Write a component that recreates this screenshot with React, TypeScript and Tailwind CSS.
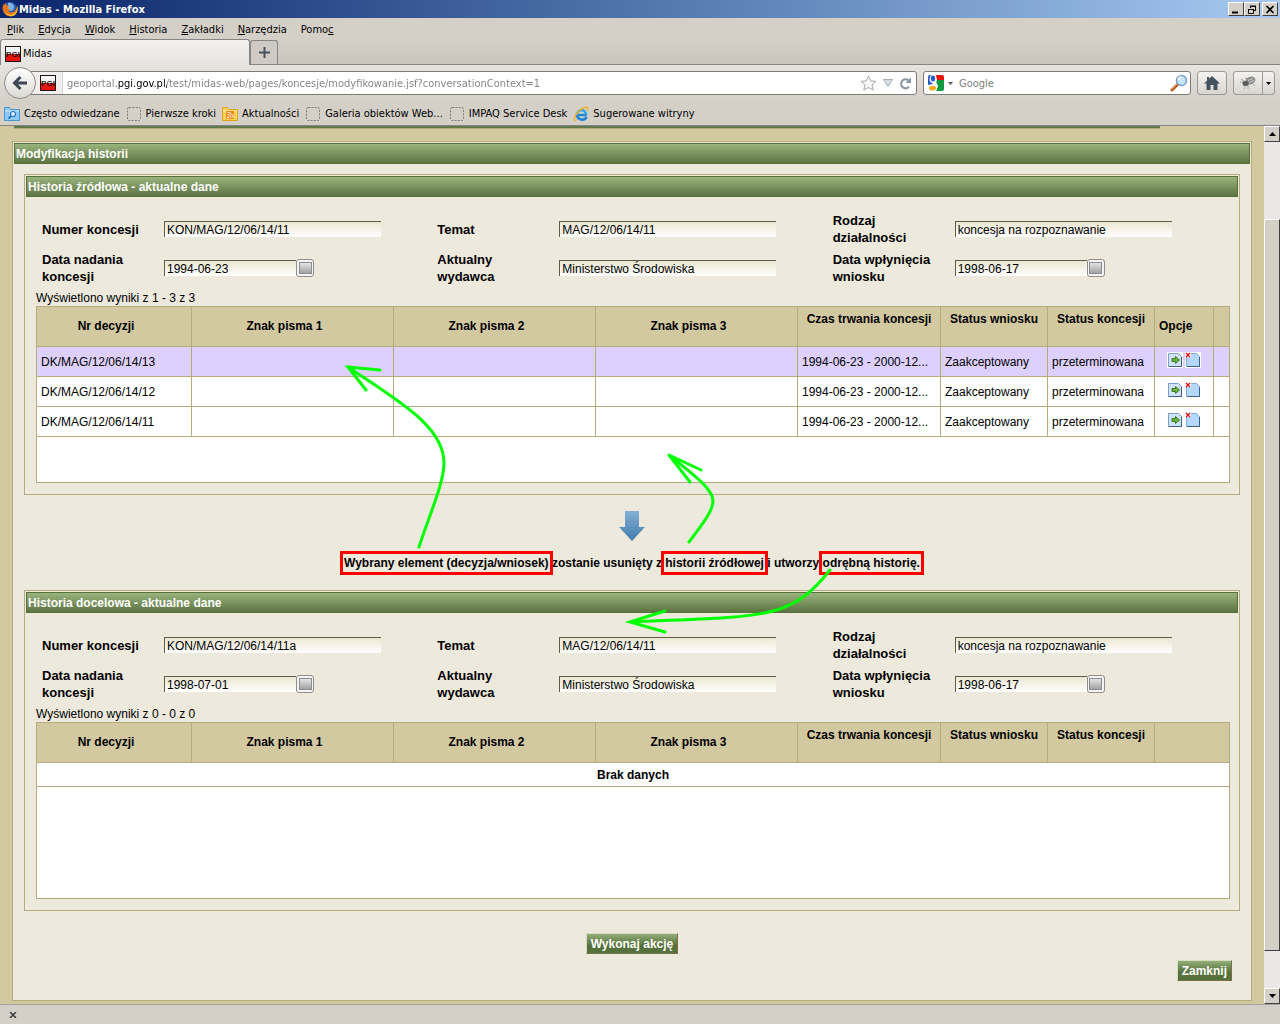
import { useId, type ReactNode } from 'react'
import clsx from 'clsx'

interface FieldData {
  label: string
  value: string
  date?: boolean
}

const SOURCE_FIELDS: FieldData[] = [
  { label: 'Numer koncesji', value: 'KON/MAG/12/06/14/11' },
  { label: 'Temat', value: 'MAG/12/06/14/11' },
  { label: 'Rodzaj działalności', value: 'koncesja na rozpoznawanie' },
  { label: 'Data nadania koncesji', value: '1994-06-23', date: true },
  { label: 'Aktualny wydawca', value: 'Ministerstwo Środowiska' },
  { label: 'Data wpłynięcia wniosku', value: '1998-06-17', date: true },
]

const TARGET_FIELDS: FieldData[] = [
  { label: 'Numer koncesji', value: 'KON/MAG/12/06/14/11a' },
  { label: 'Temat', value: 'MAG/12/06/14/11' },
  { label: 'Rodzaj działalności', value: 'koncesja na rozpoznawanie' },
  { label: 'Data nadania koncesji', value: '1998-07-01', date: true },
  { label: 'Aktualny wydawca', value: 'Ministerstwo Środowiska' },
  { label: 'Data wpłynięcia wniosku', value: '1998-06-17', date: true },
]

const DECISIONS = ['DK/MAG/12/06/14/13', 'DK/MAG/12/06/14/12', 'DK/MAG/12/06/14/11']

// text before the access key, the key itself, the rest
const MENU: [string, string, string][] = [
  ['', 'P', 'lik'],
  ['', 'E', 'dycja'],
  ['', 'W', 'idok'],
  ['', 'H', 'istoria'],
  ['', 'Z', 'akładki'],
  ['', 'N', 'arzędzia'],
  ['Pomo', 'c', ''],
]

const CELL = 'border-r border-b border-[#b6ab7b] last:border-r-0'

/* ---------- icons ---------- */

function FirefoxIcon() {
  return (
    <svg width="16" height="16" viewBox="0 0 16 16" aria-hidden="true">
      <circle cx="8" cy="8" r="7" fill="#2b5fae" />
      <path d="M6 2c3-1 6 1 6 4s-2 4-4 4-3-2-2-4z" fill="#7fb4e6" />
      <path
        d="M1.500 3c-1 3-1.500 5 0 8 2 4 7 5.500 10.500 3.500C15.500 12.500 16.500 8 15 4.500c-.3 3-1 5-3.500 6.500-2 1-5 .5-5.500-1.500 1 .4 2 0 2.700-.8-1.700 0-2.700-.7-2.700-2 0-.8.7-1 1.500-1.200C6.500 4.500 5 4 4 4.500 3.500 3.500 4 2.500 4.500 1.500 3.300 2 2.500 3 2.300 4z"
        fill="#e8741a"
      />
      <path d="M15 4.500c.6 4-1 8-5 9-3 .6-6-.6-7.500-3 1 4 6 5.500 9.500 4 3.500-2 4.500-6.500 3-10z" fill="#fbc02d" />
    </svg>
  )
}

function PgiIcon() {
  return (
    <svg width="16" height="16" viewBox="0 0 16 16" aria-hidden="true">
      <path fill="#1d1215" d="M0 0h16v16H0z" />
      <path fill="#f6f6f6" d="M1 1h14v8H1z" />
      <path fill="#e81608" d="M1 8h14v7H1z" />
      <text
        x="8"
        y="11"
        textAnchor="middle"
        fill="#1d1215"
        fontFamily="Liberation Sans Narrow, Liberation Sans, sans-serif"
        fontSize="8"
        fontWeight="bold"
      >
        PGI
      </text>
    </svg>
  )
}

function FolderIcon({ feed }: { feed?: boolean }) {
  const edge = feed ? '#e0a21c' : '#4795cf'
  return (
    <svg width="16" height="16" viewBox="0 0 16 16" aria-hidden="true">
      <path d="M.5 14.500V1.500h5l1 2h9v11z" fill={feed ? '#fbd35a' : '#8cc8f2'} stroke={edge} />
      <path d="M1 5h14" stroke={feed ? '#fdeaa5' : '#c9e8fc'} />
      {feed ? (
        <>
          <path fill="#f08a1c" d="M4 5h8v8H4z" />
          <path d="M5.500 8.500a3.500 3.500 0 013.500 3.500M5.500 6.300A5.500 5.500 0 0111.200 12" stroke="#fff" fill="none" />
          <circle cx="6" cy="11.500" r="1" fill="#fff" />
        </>
      ) : (
        <>
          <circle cx="9" cy="8" r="2.500" fill="#dff2ff" stroke="#2a78b8" strokeWidth="1.200" />
          <path d="M7.200 10L4.500 12.700" stroke="#2a78b8" strokeWidth="1.800" />
        </>
      )}
    </svg>
  )
}

function BlankIcon() {
  return (
    <svg width="16" height="16" viewBox="0 0 16 16" aria-hidden="true">
      <rect x="1.500" y="1.500" width="13" height="13" rx="1.500" fill="none" stroke="#7e7c77" strokeDasharray="2 1.300" />
    </svg>
  )
}

function ExplorerIcon() {
  return (
    <svg width="16" height="16" viewBox="0 0 16 16" aria-hidden="true">
      <path d="M14 9H4.500M4 8.500c0 6 8 6.500 9.500 2.500" fill="none" stroke="#1f86d8" strokeWidth="2.600" />
      <path d="M4 9c0-6.500 9-6.500 9 0" fill="none" stroke="#3ba5ee" strokeWidth="2.600" />
      <path d="M2.500 15C-1 13 5 3.500 11.500 1.500c3-1 4 .5 2.700 3" fill="none" stroke="#f2b01e" strokeWidth="1.400" />
    </svg>
  )
}

function GoogleIcon() {
  return (
    <svg width="16" height="16" viewBox="0 0 16 16" aria-hidden="true">
      <path fill="#fff" d="M0 0h16v16H0z" />
      <path fill="#e6160d" d="M8 0h6a2 2 0 012 2v4H9z" />
      <path fill="#139a3e" d="M9 5h7v9a2 2 0 01-2 2H8l2-5-2-3z" />
      <path fill="#2a5bc8" d="M0 2a2 2 0 012-2h1v7l2 2-5 1z" />
      <ellipse cx="5" cy="4" rx="3.400" ry="3.800" fill="#fff" />
      <ellipse cx="5" cy="3.600" rx="2.200" ry="3" fill="#2a5bc8" />
      <ellipse cx="4.500" cy="13" rx="4.500" ry="3.200" fill="#fff" />
      <ellipse cx="4.500" cy="13.200" rx="3.500" ry="2.400" fill="#f2ae1b" />
      <path d="M6 7c2 1 3 2 2.500 4" fill="none" stroke="#fff" strokeWidth="1.600" />
    </svg>
  )
}

function MagnifierIcon() {
  return (
    <svg width="18" height="18" viewBox="0 0 18 18" aria-hidden="true">
      <path d="M7.500 10.500L2 16" stroke="#c05a1c" strokeWidth="3" strokeLinecap="round" />
      <path d="M6.500 10.500L2 15" stroke="#f3a45a" strokeLinecap="round" />
      <circle cx="11.500" cy="6.500" r="5" fill="#c5e7fb" stroke="#7b9fd0" strokeWidth="1.500" />
      <path d="M8.500 6a3 3 0 013-3" stroke="#fff" strokeWidth="1.500" fill="none" />
    </svg>
  )
}

function BackIcon() {
  return (
    <svg width="16" height="16" viewBox="0 0 16 16" aria-hidden="true">
      <path d="M8.500 2L2.500 8l6 6M3 8h12" fill="none" stroke="#3b4754" strokeWidth="3" />
    </svg>
  )
}

function StarIcon() {
  return (
    <svg width="17" height="16" viewBox="0 0 17 16" aria-hidden="true">
      <path
        d="M8.500 1l2.200 4.800 5.300.6-4 3.500 1.200 5.100-4.700-2.600L3.800 15 5 9.900 1 6.400l5.300-.6z"
        fill="#f7f7f7"
        stroke="#a9a9a9"
      />
    </svg>
  )
}

function ReloadIcon() {
  return (
    <svg width="13" height="13" viewBox="0 0 13 13" aria-hidden="true">
      <path d="M10 9.800A4.500 4.500 0 119.500 3.300" fill="none" stroke="#8b98a5" strokeWidth="2.200" />
      <path d="M12 .5v5.500H6.500z" fill="#8b98a5" />
    </svg>
  )
}

function HomeIcon() {
  return (
    <svg width="16" height="14" viewBox="0 0 16 14" aria-hidden="true">
      <path d="M8 0l8 7.500h-2.500V14h-4V9h-3v5h-4V7.500H0L3 4.700V1h2v1.800z" fill="#46535f" />
    </svg>
  )
}

function BugIcon() {
  return (
    <svg width="16" height="14" viewBox="0 0 16 14" aria-hidden="true">
      <path d="M1 3l5 3M0 6h5M4 13l2-4M8 13V9M13 8l2 2M5 2l3 1" stroke="#a5a5a5" />
      <ellipse cx="10.500" cy="4.500" rx="5" ry="3.700" fill="#8a8a8a" transform="rotate(-20 10.500 4.500)" />
      <ellipse cx="5.500" cy="7.500" rx="3" ry="2.500" fill="#5c5c5c" />
      <path d="M8 4.500l5-2M9 6.500l5-2" stroke="#c9c9c9" />
    </svg>
  )
}

function Caret({ color }: { color: string }) {
  return (
    <svg width="5" height="3" viewBox="0 0 5 3" aria-hidden="true">
      <path d="M0 0h5L2.500 3z" fill={color} />
    </svg>
  )
}

function MoveIcon() {
  return (
    <svg width="16" height="16" viewBox="0 0 16 16" aria-hidden="true">
      <path fill="#fff" d="M0 0h16v16H0z" />
      <path d="M1.500 1.500h10l3 3v10h-13z" fill="#cfe4fb" stroke="#7d9fc8" />
      <path d="M14.500 5v9.500H2" fill="none" stroke="#3e5f8a" />
      <path d="M5 6.500h3.500V4.500l4 3.500-4 3.500v-2H5z" fill="#6cb33c" stroke="#3c7a1f" />
    </svg>
  )
}

function RemoveIcon() {
  return (
    <svg width="16" height="16" viewBox="0 0 16 16" aria-hidden="true">
      <path fill="#fff" d="M0 0h16v16H0z" />
      <path d="M1.500 1.500h10l3 3v10h-13z" fill="#b4d8fb" stroke="#7fa9da" />
      <path d="M14.500 5v9.500H2" fill="none" stroke="#3e5f8a" />
      <path fill="#fff" d="M0 0h6v5H0z" />
      <path d="M1 1l4 4M5 1L1 5" stroke="#e01414" strokeWidth="1.400" />
    </svg>
  )
}

function DownArrow() {
  return (
    <svg width="26" height="30" viewBox="0 0 26 30" aria-hidden="true">
      <defs>
        <linearGradient id="down" x1="0" y1="0" x2="0" y2="1">
          <stop offset="0" stopColor="#85afd2" />
          <stop offset="1" stopColor="#3f7cae" />
        </linearGradient>
      </defs>
      <path d="M6 0h14v16h6L13 30 0 16h6z" fill="url(#down)" />
    </svg>
  )
}

/* ---------- browser window ---------- */

function CaptionButton({ label, children }: { label: string; children: ReactNode }) {
  return (
    <button
      type="button"
      aria-label={label}
      className="flex h-[14px] w-4 items-center justify-center border border-t-white border-r-[#404040] border-b-[#404040] border-l-white bg-[#d4d0c8]"
    >
      <svg width="10" height="9" viewBox="0 0 10 9" fill="none" stroke="#000" aria-hidden="true">
        {children}
      </svg>
    </button>
  )
}

function TitleBar() {
  return (
    <header className="flex h-[18px] items-center bg-gradient-to-r from-[#0a246a] to-[#a6caf0] px-0.5">
      <FirefoxIcon />
      <span className="flex-1 pt-0.5 pl-px font-bold text-white">Midas - Mozilla Firefox</span>
      <CaptionButton label="Minimalizuj">
        <path d="M1 7.500h6" strokeWidth="2" />
      </CaptionButton>
      <CaptionButton label="Przywróć">
        <path d="M3.500 3V1.500h5v4H7M3 1h6M1.500 4.500h5v4h-5zM1 4.500h6" />
      </CaptionButton>
      <span className="w-0.5" />
      <CaptionButton label="Zamknij okno">
        <path d="M1.500 1l7 7M8.500 1l-7 7" strokeWidth="1.600" />
      </CaptionButton>
    </header>
  )
}

function MenuBar() {
  return (
    <nav className="flex h-[21px] items-center gap-3.5 pt-1 pl-[7px]">
      {MENU.map(([before, key, after]) => (
        <button key={key} type="button">
          {before}
          <u>{key}</u>
          {after}
        </button>
      ))}
    </nav>
  )
}

function TabStrip() {
  return (
    <div className="flex h-[26px] items-end border-b border-[#858585] bg-gradient-to-b from-[#d4d0c8] to-[#c9c5bd]">
      <div className="-mb-px flex h-[26px] w-[250px] items-center gap-0.5 rounded-t-[3px] border border-b-0 border-[#858585] bg-gradient-to-b from-[#f2f1ee] to-[#e6e4e0] pt-0.5 pl-1">
        <PgiIcon />
        <span className="pt-0.5">Midas</span>
      </div>
      <button
        type="button"
        aria-label="Nowa karta"
        className="flex h-6 w-7 items-center justify-center rounded-t-[3px] border border-b-0 border-[#858585] bg-[#cfcbc4]"
      >
        <svg width="11" height="11" viewBox="0 0 11 11" aria-hidden="true">
          <path d="M5.500 0v11M0 5.500h11" stroke="#4a545e" strokeWidth="2" />
        </svg>
      </button>
    </div>
  )
}

function NavBar() {
  return (
    <div className="flex h-9 items-center bg-gradient-to-b from-[#e6e4df] to-[#d4d0c8] pr-[5px] pl-1">
      <button
        type="button"
        aria-label="Wstecz"
        className="z-10 flex size-8 items-center justify-center rounded-full border border-[#8c8a86] bg-gradient-to-b from-white to-[#dcdad5]"
      >
        <BackIcon />
      </button>
      <div className="-ml-1.5 flex h-6 flex-1 items-center rounded-r-[3px] border border-[#7d7b77] bg-white pr-1">
        <span className="flex h-full w-8 items-center justify-end border-r border-[#d6d6d6] bg-[#f0efed] pr-1.5 pl-2">
          <PgiIcon />
        </span>
        {/* the domain part is darker than the rest of the address */}
        <input
          aria-label="Adres"
          className="min-w-0 flex-1 bg-[linear-gradient(90deg,#808080_53px,#000_53px,#000_104px,#808080_104px)] bg-clip-text pt-0.5 pl-1 text-transparent outline-none"
          defaultValue="geoportal.pgi.gov.pl/test/midas-web/pages/koncesje/modyfikowanie.jsf?conversationContext=1"
        />
        <span className="flex items-center gap-1.5">
          <StarIcon />
          <svg width="10" height="8" viewBox="0 0 10 8" aria-hidden="true">
            <path d="M.5.500h9L5 7.500z" fill="#d6dde4" stroke="#a5adb5" />
          </svg>
          <ReloadIcon />
        </span>
      </div>
      <div className="ml-1.5 flex h-6 w-[268px] items-center rounded-[3px] border border-[#7d7b77] bg-white pr-0.5 pl-1">
        <GoogleIcon />
        <span className="px-1">
          <Caret color="#555" />
        </span>
        <input
          aria-label="Szukaj"
          placeholder="Google"
          className="min-w-0 flex-1 pt-0.5 pl-0.5 outline-none placeholder:text-[#808080]"
        />
        <MagnifierIcon />
      </div>
      <button
        type="button"
        aria-label="Strona startowa"
        className="ml-1.5 flex h-6 w-[30px] items-center justify-center rounded-[3px] border border-[#9c9a95] bg-gradient-to-b from-[#f4f3f1] to-[#d8d5ce]"
      >
        <HomeIcon />
      </button>
      <div className="ml-1.5 flex h-6 w-[42px] rounded-[3px] border border-[#9c9a95] bg-gradient-to-b from-[#f4f3f1] to-[#d8d5ce]">
        <button type="button" aria-label="Firebug" className="flex flex-1 items-center justify-center">
          <BugIcon />
        </button>
        <button
          type="button"
          aria-label="Opcje Firebug"
          className="flex w-3 items-center justify-center border-l border-[#9c9a95]"
        >
          <Caret color="#000" />
        </button>
      </div>
    </div>
  )
}

function Bookmark({ icon, children }: { icon: ReactNode; children: ReactNode }) {
  return (
    <a href="#" className="flex items-center gap-1">
      {icon}
      {children}
    </a>
  )
}

function Bookmarks() {
  return (
    <nav className="flex h-[25px] items-center gap-1.5 border-b border-[#858585] pt-0.5 pl-1">
      <Bookmark icon={<FolderIcon />}>Często odwiedzane</Bookmark>
      <Bookmark icon={<BlankIcon />}>Pierwsze kroki</Bookmark>
      <Bookmark icon={<FolderIcon feed />}>Aktualności</Bookmark>
      <Bookmark icon={<BlankIcon />}>Galeria obiektów Web...</Bookmark>
      <Bookmark icon={<BlankIcon />}>IMPAQ Service Desk</Bookmark>
      <Bookmark icon={<ExplorerIcon />}>Sugerowane witryny</Bookmark>
    </nav>
  )
}

function ScrollButton({ label, d }: { label: string; d: string }) {
  return (
    <button
      type="button"
      aria-label={label}
      className="flex h-4 items-center justify-center border border-t-white border-r-[#404040] border-b-[#404040] border-l-white bg-[#d4d0c8]"
    >
      <svg width="7" height="4" viewBox="0 0 7 4" aria-hidden="true">
        <path d={d} />
      </svg>
    </button>
  )
}

function Scrollbar() {
  return (
    <div className="flex w-4 shrink-0 flex-col bg-[#eae8e4]">
      <ScrollButton label="W górę" d="M0 4h7L3.500 0z" />
      <div className="grow-[77]" />
      <div className="grow-[732] border border-t-white border-r-[#404040] border-b-[#404040] border-l-white bg-[#d4d0c8]" />
      <div className="grow-[37]" />
      <ScrollButton label="W dół" d="M0 0h7L3.500 4z" />
    </div>
  )
}

/* ---------- page ---------- */

function Panel({ title, className, children }: { title: string; className?: string; children: ReactNode }) {
  return (
    <section className={clsx('border border-[#b6ab7b] bg-[#ede9dc] p-px', className)}>
      <h2 className="h-[21px] border border-[#56713c] bg-gradient-to-b from-[#9ab47e] to-[#5c7442] pl-px leading-5 font-bold text-white">
        {title}
      </h2>
      {children}
    </section>
  )
}

function Field({ label, value, date }: FieldData) {
  const id = useId()
  return (
    <div className="flex h-[34px] items-center">
      <label htmlFor={id} className="w-[122px] shrink-0 pr-3 text-[13px] leading-[17px] font-bold">
        {label}
      </label>
      <input
        id={id}
        defaultValue={value}
        className={clsx(
          'h-4 border-t border-l border-[#5f5c48] bg-gradient-to-b from-[#ece6d2] to-white pl-0.5 outline-none',
          date ? 'w-[132px]' : 'w-[217px]',
        )}
      />
      {date && (
        <button
          type="button"
          aria-label="Wybierz datę"
          className="flex size-[18px] items-center justify-center rounded-[3px] border border-[#8f8f8f] bg-[#f4f4f4]"
        >
          <span className="h-3 w-[13px] border border-[#8c8c8c] bg-gradient-to-b from-[#e4e4e4] to-[#a2a2a2]" />
        </button>
      )}
    </div>
  )
}

function Fields({ items }: { items: FieldData[] }) {
  return (
    <div className="grid grid-cols-3 gap-y-[5px] pt-[15px] pr-2.5 pb-[5px] pl-4">
      {items.map((item) => (
        <Field key={item.label} {...item} />
      ))}
    </div>
  )
}

interface HistoryTableProps {
  summary: string
  options?: boolean
  children: ReactNode
}

function HistoryTable({ summary, options, children }: HistoryTableProps) {
  return (
    <div className="pr-2 pb-2.5 pl-2.5">
      <p className="leading-4">{summary}</p>
      <div className="h-[177px] border border-[#b6ab7b] bg-white">
        <table className="w-full table-fixed border-separate border-spacing-0">
          <colgroup>
            <col className="w-[155px]" />
            <col />
            <col />
            <col />
            <col className="w-[143px]" />
            <col className="w-[107px]" />
            <col className="w-[107px]" />
            <col className={options ? 'w-[59px]' : 'w-[74px]'} />
            {options && <col className="w-[15px]" />}
          </colgroup>
          <thead>
            <tr className="h-10 bg-[#d2c9a1]">
              <th className={clsx(CELL, 'pr-4 pb-0.5')}>Nr decyzji</th>
              <th className={clsx(CELL, 'pr-4 pb-0.5')}>Znak pisma 1</th>
              <th className={clsx(CELL, 'pr-4 pb-0.5')}>Znak pisma 2</th>
              <th className={clsx(CELL, 'pr-4 pb-0.5')}>Znak pisma 3</th>
              <th className={clsx(CELL, 'pb-4')}>Czas trwania koncesji</th>
              <th className={clsx(CELL, 'pb-4')}>Status wniosku</th>
              <th className={clsx(CELL, 'pb-4')}>Status koncesji</th>
              <th className={clsx(CELL, 'pb-0.5 pl-1 text-left')}>{options && 'Opcje'}</th>
              {options && <th className={CELL} />}
            </tr>
          </thead>
          <tbody>{children}</tbody>
        </table>
      </div>
    </div>
  )
}

function DecisionRow({ number, selected }: { number: string; selected: boolean }) {
  const cell = clsx(CELL, 'pl-1 whitespace-nowrap')
  return (
    <tr className={clsx('h-[30px]', selected && 'bg-[#ddd0ff]')}>
      <td className={cell}>{number}</td>
      <td className={cell} />
      <td className={cell} />
      <td className={cell} />
      <td className={cell}>1994-06-23 - 2000-12...</td>
      <td className={cell}>Zaakceptowany</td>
      <td className={cell}>przeterminowana</td>
      <td className={CELL}>
        <div className="flex justify-center gap-0.5 pb-1">
          <button type="button" aria-label="Przenieś">
            <MoveIcon />
          </button>
          <button type="button" aria-label="Usuń">
            <RemoveIcon />
          </button>
        </div>
      </td>
      <td className={CELL} />
    </tr>
  )
}

function Marked({ children }: { children: ReactNode }) {
  return (
    <span className="relative">
      {children}
      <span className="absolute -inset-x-1 -inset-y-[5px] border-3 border-[#f00]" />
    </span>
  )
}

function Arrows() {
  return (
    <svg
      className="pointer-events-none absolute top-[235px] left-1/2 -translate-x-1/2"
      width="600"
      height="280"
      viewBox="332 361 600 280"
      fill="none"
      stroke="#0f0"
      strokeWidth="3"
      strokeLinecap="round"
      aria-hidden="true"
    >
      <path d="M419 547C428 518 444 484 444 463C444 426 398 401 348 367M380 370L348 367L366 390" />
      <path d="M689 542C705 521 713 510 713 501C713 489 695 476 669 455M701 470L669 455L690 482" />
      <path d="M830 570C790 621 763 616 630 622M665 611L630 622L665 632" />
    </svg>
  )
}

function ActionButton({ children }: { children: ReactNode }) {
  return (
    <button
      type="button"
      className="h-[21px] border border-t-[#d5dcc0] border-r-[#77704a] border-b-[#77704a] border-l-[#d5dcc0] bg-gradient-to-b from-[#94ae78] to-[#56713c] to-60% px-1 font-bold text-white"
    >
      {children}
    </button>
  )
}

function Page() {
  return (
    <main className="relative min-w-0 flex-1 bg-[#d2c9a1] px-3 pb-[3px] font-['Liberation_Sans',Arial,sans-serif] text-xs text-black">
      <div className="mr-[92px] ml-0.5 h-[3px] border-b border-[#b6ab7b] bg-[#5f7a48]" />
      <Panel title="Modyfikacja historii" className="mt-3">
        <div className="px-2.5 pt-2.5 pb-[18px]">
          <Panel title="Historia źródłowa - aktualne dane">
            <Fields items={SOURCE_FIELDS} />
            <HistoryTable summary="Wyświetlono wyniki z 1 - 3 z 3" options>
              {DECISIONS.map((number, i) => (
                <DecisionRow key={number} number={number} selected={i === 0} />
              ))}
            </HistoryTable>
          </Panel>

          <div className="flex h-[95px] flex-col items-center gap-3.5 pt-4">
            <DownArrow />
            <p className="leading-4 font-bold whitespace-nowrap">
              <Marked>Wybrany element (decyzja/wniosek)</Marked> zostanie usunięty z{' '}
              <Marked>historii źródłowej</Marked> i utworzy <Marked>odrębną historię.</Marked>
            </p>
          </div>

          <Panel title="Historia docelowa - aktualne dane">
            <Fields items={TARGET_FIELDS} />
            <HistoryTable summary="Wyświetlono wyniki z 0 - 0 z 0">
              <tr className="h-6">
                <td colSpan={8} className={clsx(CELL, 'text-center font-bold')}>
                  Brak danych
                </td>
              </tr>
            </HistoryTable>
          </Panel>

          <div className="mt-[22px] flex justify-center">
            <ActionButton>Wykonaj akcję</ActionButton>
          </div>
          <div className="mt-1.5 flex justify-end pr-2">
            <ActionButton>Zamknij</ActionButton>
          </div>
        </div>
      </Panel>
      <Arrows />
    </main>
  )
}

export default function App() {
  return (
    <div className="bg-[#d4d0c8] font-['DejaVu_Sans_Condensed','DejaVu_Sans',Tahoma,sans-serif] text-[11px] text-black">
      <TitleBar />
      <MenuBar />
      <TabStrip />
      <NavBar />
      <Bookmarks />
      <div className="flex">
        <Page />
        <Scrollbar />
      </div>
      <footer className="flex h-5 items-center border-t border-[#a5a29b] pl-[9px]">
        <button type="button" aria-label="Zamknij pasek dodatków">
          <svg width="8" height="6" viewBox="0 0 8 6" aria-hidden="true">
            <path d="M1 0l6 6M7 0L1 6" stroke="#3a3a3a" strokeWidth="1.500" />
          </svg>
        </button>
      </footer>
    </div>
  )
}
